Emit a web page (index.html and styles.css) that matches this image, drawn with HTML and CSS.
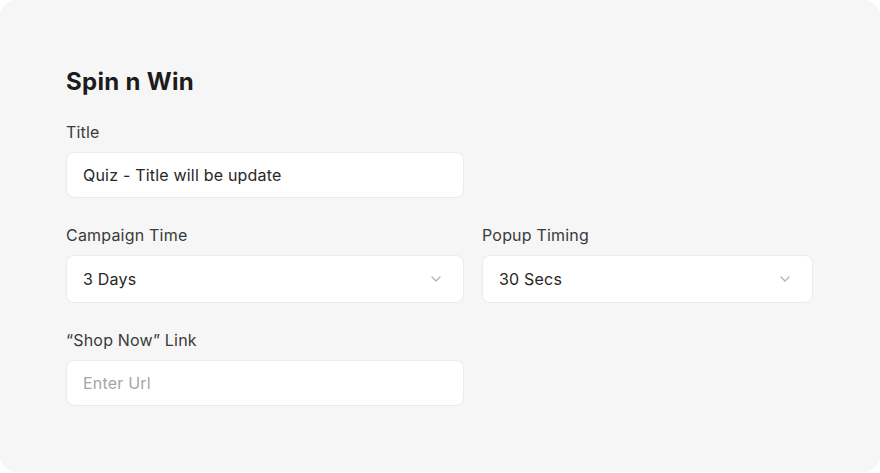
FILE: index.html
```html
<!DOCTYPE html>
<html>
<head>
<meta charset="utf-8">
<link rel="stylesheet" href="styles.css">
</head>
<body>
<div class="card">
  <h1 class="heading">Spin n Win</h1>
  <div class="field">
    <div class="label">Title</div>
    <div class="input wide">Quiz - Title will be update</div>
  </div>
  <div class="row">
    <div class="field">
      <div class="label">Campaign Time</div>
      <div class="select wide"><span>3 Days</span>
        <svg class="chev" width="10" height="6" viewBox="0 0 10 6"><path d="M1 1l4 4 4-4" fill="none" stroke="#b3b3b3" stroke-width="1.3" stroke-linecap="round" stroke-linejoin="round"/></svg>
      </div>
    </div>
    <div class="field">
      <div class="label">Popup Timing</div>
      <div class="select narrow"><span>30 Secs</span>
        <svg class="chev" width="10" height="6" viewBox="0 0 10 6"><path d="M1 1l4 4 4-4" fill="none" stroke="#b3b3b3" stroke-width="1.3" stroke-linecap="round" stroke-linejoin="round"/></svg>
      </div>
    </div>
  </div>
  <div class="field">
    <div class="label">“Shop Now” Link</div>
    <div class="input wide placeholder">Enter Url</div>
  </div>
</div>
</body>
</html>
```
FILE: styles.css
```css
html, body {
  margin: 0;
  padding: 0;
  background: #ffffff;
}
body {
  font-family: Inter, "Noto Sans", sans-serif;
}
.card {
  box-sizing: border-box;
  width: 880px;
  height: 472px;
  background: #f6f6f6;
  border-radius: 16px;
  padding: 68px 66px 0 66px;
  display: flex;
  flex-direction: column;
  gap: 27px;
}
.heading {
  margin: 0;
  font-size: 24px;
  line-height: 27px;
  font-weight: 700;
  color: #1c1c1c;
  letter-spacing: 0.3px;
}
.field {
  display: flex;
  flex-direction: column;
  gap: 10px;
}
.row {
  display: flex;
  gap: 18px;
}
.label {
  font-size: 16px;
  line-height: 20px;
  color: #3a3a3a;
  letter-spacing: 0.2px;
}
.input, .select {
  box-sizing: border-box;
  background: #ffffff;
  border: 1px solid #ebebeb;
  border-radius: 8px;
  font-size: 16px;
  color: #262626;
  letter-spacing: 0.2px;
  display: flex;
  align-items: center;
  padding: 0 22px 0 16px;
}
.input {
  height: 46px;
}
.select {
  height: 48px;
  justify-content: space-between;
}
.wide {
  width: 398px;
}
.narrow {
  width: 331px;
}
.placeholder {
  color: #a4a4ab;
}
.chev {
  display: block;
}
```
